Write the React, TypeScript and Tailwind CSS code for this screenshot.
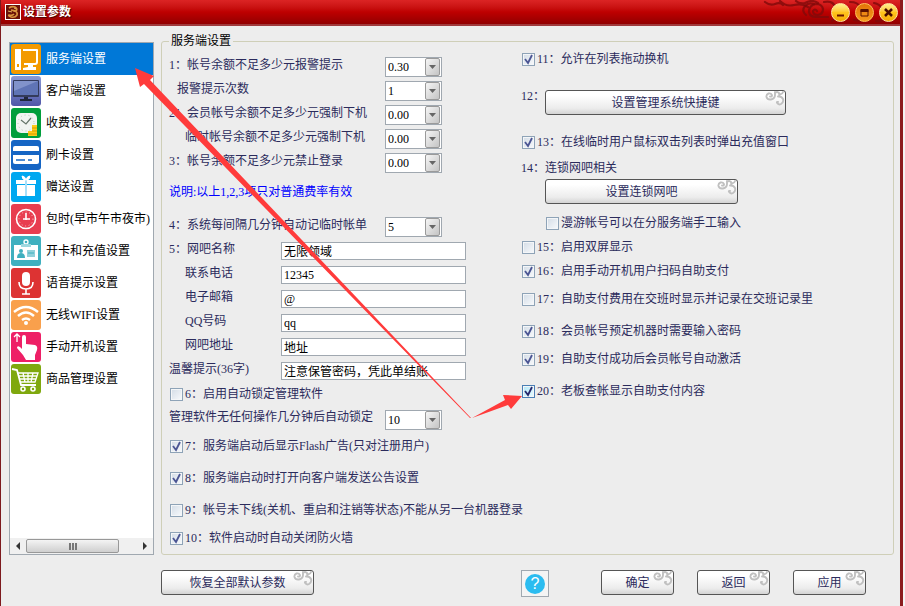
import { useState } from "react";
import type { ReactNode } from "react";
import clsx from "clsx";

interface MenuItem {
  label: string;
  color: string;
  icon: ReactNode;
}

interface CheckItem {
  id: string;
  label: string;
  checked: boolean;
  className: string;
}

const MENU: MenuItem[] = [
  {
    label: "服务端设置",
    color: "bg-[#f39a00]",
    icon: (
      <>
        <path d="M4 5h6v21H4z" fill="#fff" />
        <path d="M6 20h2v3H6z" fill="#f39a00" />
        <path d="M12 6h14v12q0 2-2 2H13" fill="none" stroke="#fff" strokeWidth="2" strokeLinejoin="round" />
        <path d="M17 20h5v3h3v3H12v-2l5-1z" fill="#fff" />
      </>
    ),
  },
  {
    label: "客户端设置",
    color: "bg-linear-to-b from-[#8b9ad6] to-[#5057a8]",
    icon: (
      <>
        <rect x="2" y="4" width="26" height="17" rx="1" fill="#333b5c" />
        <rect x="3" y="5" width="24" height="14" fill="#5f74b6" />
        <path d="M3 5h24L3 15z" fill="#8193cb" />
        <path d="M13 21h4v2h4v2H9v-2h4z" fill="#20273c" />
      </>
    ),
  },
  {
    label: "收费设置",
    color: "bg-[#009e3b]",
    icon: (
      <>
        <rect x="5" y="5" width="21" height="20" rx="5" fill="#f1f4f1" />
        <circle cx="15" cy="15" r="8" fill="none" stroke="#b9c4bb" strokeDasharray="1 3" />
        <path d="M10 12l5 4 5-6" fill="none" stroke="#66756a" strokeWidth="1.2" />
        <path d="M21 17h5v11h-5zM17 23h5v5h-5z" fill="#ffca18" />
        <path d="M21 20h5M21 23h5M17 26h9" stroke="#d69c00" />
      </>
    ),
  },
  {
    label: "刷卡设置",
    color: "bg-[#1565c4]",
    icon: (
      <>
        <path d="M2 11V8q0-2 2-2h22q2 0 2 2v3z" fill="#fff" />
        <path d="M2 15h26v7q0 2-2 2H4q-2 0-2-2z" fill="#fff" />
        <path d="M5 20h9m3 0h4" stroke="#1565c4" strokeWidth="1.4" />
      </>
    ),
  },
  {
    label: "赠送设置",
    color: "bg-[#00a8f0]",
    icon: (
      <>
        <path d="M5 8h9v4H5zM16 8h9v4h-9zM6 13h8v11H6zM16 13h8v11h-8z" fill="#fff" />
        <path d="M14 8h2v16h-2z" fill="#a9e0fa" />
        <path d="M15 8q-4 0-4-4 3 0 4 4zm0 0q4 0 4-4-3 0-4 4z" fill="#fff" stroke="#fff" />
      </>
    ),
  },
  {
    label: "包时(早市午市夜市)",
    color: "bg-[#e83e50]",
    icon: (
      <>
        <circle cx="15" cy="15" r="9.500" fill="none" stroke="#fff" strokeWidth="1.600" />
        <circle cx="15" cy="15" r="7" fill="none" stroke="#fbc3c8" strokeDasharray="1 2.600" />
        <path d="M15 9v7M12 15h7" fill="none" stroke="#fff" strokeWidth="1.600" />
      </>
    ),
  },
  {
    label: "开卡和充值设置",
    color: "bg-[#3fb0bf]",
    icon: (
      <>
        <path d="M3 9h24v15H3z" fill="#fff" />
        <circle cx="15" cy="6" r="2" fill="none" stroke="#fff" strokeWidth="1.400" />
        <path d="M10 8h10v3H10z" fill="#9ed8df" />
        <circle cx="10" cy="15" r="2" fill="#3fb0bf" />
        <path d="M6 22q0-5 4-5t4 5z" fill="#3fb0bf" />
        <path d="M16 14h8v7h-8z" fill="#8fd1da" />
        <path d="M17 17h6" stroke="#3fb0bf" />
      </>
    ),
  },
  {
    label: "语音提示设置",
    color: "bg-[#dd3333]",
    icon: (
      <>
        <rect x="11" y="4" width="8" height="14" rx="4" fill="#fff" />
        <path d="M8 14q0 7 7 7t7-7M15 21v5" fill="none" stroke="#fff" strokeWidth="1.600" />
        <path d="M11 26h8" stroke="#fff" strokeWidth="1.600" />
      </>
    ),
  },
  {
    label: "无线WIFI设置",
    color: "bg-[#f9a04c]",
    icon: (
      <>
        <path
          d="M3 12q12-10 24 0M7 16q8-7 16 0M11 20q4-3 8 0"
          fill="none"
          stroke="#fff"
          strokeWidth="2.400"
        />
        <circle cx="15" cy="23" r="2" fill="#fff" />
      </>
    ),
  },
  {
    label: "手动开机设置",
    color: "bg-[#ee1f66]",
    icon: (
      <>
        <path d="M6 10V3M3 5l3-3 3 3" fill="none" stroke="#fff" strokeWidth="1.300" />
        <path
          d="M11 5q0-2 2-2t2 2v7l9 1q3 1 2 5l-2 5v5H15l-3-5-6-7q0-3 3-1l2 2z"
          fill="#fff"
        />
      </>
    ),
  },
  {
    label: "商品管理设置",
    color: "bg-[#7fa80e]",
    icon: (
      <>
        <path d="M1 5l5 1 4 15h15" fill="none" stroke="#fff" strokeWidth="1.800" />
        <path
          d="M7 9h20l-3 9H10M8 12h18M9 15h16M12 9l2 9M17 9v9M22 9l-2 9"
          fill="none"
          stroke="#fff"
          strokeWidth="1.300"
        />
        <circle cx="12" cy="25" r="2" fill="none" stroke="#fff" strokeWidth="1.600" />
        <circle cx="22" cy="25" r="2" fill="none" stroke="#fff" strokeWidth="1.600" />
      </>
    ),
  },
];

const ALARMS = [
  { id: "alarm", label: "1：帐号余额不足多少元报警提示", value: "0.30", indent: "" },
  { id: "times", label: "报警提示次数", value: "1", indent: "pl-2" },
  { id: "member", label: "2：会员帐号余额不足多少元强制下机", value: "0.00", indent: "" },
  { id: "temp", label: "临时帐号余额不足多少元强制下机", value: "0.00", indent: "pl-4" },
  { id: "login", label: "3：帐号余额不足多少元禁止登录", value: "0.00", indent: "" },
];

const FIELDS = [
  { id: "name", label: "5：网吧名称", value: "无限领域", indent: "" },
  { id: "phone", label: "联系电话", value: "12345", indent: "pl-4" },
  { id: "mail", label: "电子邮箱", value: "@", indent: "pl-4" },
  { id: "qq", label: "QQ号码", value: "qq", indent: "pl-4" },
  { id: "address", label: "网吧地址", value: "地址", indent: "pl-4" },
  { id: "tips", label: "温馨提示(36字)", value: "注意保管密码，凭此单结账", indent: "" },
];

const LEFT_CHECKS: CheckItem[] = [
  { id: "c7", label: "7：服务端启动后显示Flash广告(只对注册用户)", checked: true, className: "" },
  { id: "c8", label: "8：服务端启动时打开向客户端发送公告设置", checked: true, className: "mt-2.5" },
  { id: "c9", label: "9：帐号未下线(关机、重启和注销等状态)不能从另一台机器登录", checked: false, className: "mt-2.5" },
  { id: "c10", label: "10：软件启动时自动关闭防火墙", checked: true, className: "mt-1.5" },
];

const RIGHT_CHECKS: CheckItem[] = [
  { id: "roam", label: "漫游帐号可以在分服务端手工输入", checked: false, className: "ml-6 mt-2" },
  { id: "c15", label: "15：启用双屏显示", checked: false, className: "mt-0.5" },
  { id: "c16", label: "16：启用手动开机用户扫码自助支付", checked: true, className: "mt-0.5" },
  { id: "c17", label: "17：自助支付费用在交班时显示并记录在交班记录里", checked: false, className: "mt-1.5" },
  { id: "c18", label: "18：会员帐号预定机器时需要输入密码", checked: true, className: "mt-2.5" },
  { id: "c19", label: "19：自助支付成功后会员帐号自动激活", checked: true, className: "mt-1.5" },
  { id: "c20", label: "20：老板查帐显示自助支付内容", checked: true, className: "mt-2.5" },
];

function Check({ id, label, checked, className }: CheckItem) {
  const active = id === "c20";
  return (
    <label htmlFor={id} className={clsx("flex h-[22px] items-center gap-0.5 whitespace-nowrap pl-px", className)}>
      <span className="relative flex">
        <input
          id={id}
          type="checkbox"
          defaultChecked={checked}
          className={clsx(
            "peer size-[13px] appearance-none border bg-linear-to-br shadow-[inset_0_0_0_1px_#f4f6f8]",
            active
              ? "border-[#4a7fb5] from-[#b4e8f8] to-[#e8fbff]"
              : "border-[#8ea3b7] from-[#d3dce6] to-[#f8fafc]"
          )}
        />
        <svg
          viewBox="0 0 13 13"
          className="pointer-events-none absolute inset-0 hidden size-[13px] peer-checked:block"
        >
          <path
            d="M3 6l3 4 4-8"
            fill="none"
            stroke={active ? "#27276b" : "#4b5593"}
            strokeWidth="1.800"
          />
        </svg>
      </span>
      {label}
    </label>
  );
}

function Combo({ id, value }: { id: string; value: string }) {
  return (
    <span className="relative flex h-5 w-[57px] shrink-0">
      <select
        id={id}
        defaultValue={value}
        className="w-full appearance-none border border-[#a0a8b0] bg-white pl-0.5 leading-4 text-black outline-none"
      >
        <option>{value}</option>
      </select>
      <span className="pointer-events-none absolute inset-y-px right-0.5 flex w-[15px] items-center justify-center rounded-xs border border-[#9a9a9a] bg-linear-to-br from-[#f6f6f6] to-[#c4c4c4]">
        <svg viewBox="0 0 7 4" className="h-1 w-[7px]">
          <path d="M0 0h7L3.500 4z" fill="#666" />
        </svg>
      </span>
    </span>
  );
}

function CloudButton({ label, className }: { label: string; className: string }) {
  return (
    <button
      type="button"
      className={clsx(
        "relative h-[25px] shrink-0 rounded-[3px] border border-[#555] bg-linear-to-b from-white from-20% via-[#ececec] via-75% to-[#d4d4d4] leading-4 text-[#2b2b5c]",
        className
      )}
    >
      {label}
      <svg viewBox="0 0 20 16" className="absolute right-0 top-0 h-4 w-5">
        <path
          d="M5 5.500q2 .5 2-1.300Q6 2 3.500 2.500 1 3.500 1.500 6q1 3 4.500 2.500 4-.8 4-4.500V1M10 2q2-2 4 0 1 1.500 0 3M14 3q3 1 4-2M13 11q-1.500-.5-1 .8 1.500 2.500 4 1.200 3-2 2-5-1.500-3-5-2.500"
          fill="none"
          stroke="#c0c0c0"
          strokeWidth="1.900"
          strokeLinecap="round"
        />
      </svg>
    </button>
  );
}

function TitleBar() {
  return (
    <header className="relative flex h-[26px] items-center gap-0.5 border-b-2 border-[#a03a3c] bg-linear-to-b from-[#dc2424] via-[#be0000] to-[#920000] pl-1 pr-0.5">
      <svg viewBox="0 0 140 24" className="absolute right-0 top-0 h-6 w-[140px]">
        <g fill="none" stroke="#800a0a" strokeOpacity=".8" strokeWidth="2.200" strokeLinecap="round">
          <path d="M5 2q5 4 10 2t8 1M20 1q6 6 14 4t14 2M36 1q3 3 9 2 7-4 13 0" />
          <path d="M46 15q-5-4-1-9 4-4 9-2" />
          <path d="M57 11q-2-3-4 0 0 4 5 4 5-1 5-6-1-5-7-5-7 1-7 8 1 5 7 5h12" />
          <path d="M64 2q9-2 11 5 0 6 7 6M72 21q4-4 8-1M90 2q8 0 10 5M94 20q8 2 12-3M114 3q6 1 8 6M116 21q6 1 9-3" />
        </g>
      </svg>
      <svg viewBox="0 0 16 16" className="size-4 shrink-0">
        <rect x=".5" y=".5" width="15" height="15" fill="#6a1208" stroke="#fff" />
        <path
          d="M4 4q3-2 6-1 3 2 1 4l-5-1M8 7q5 0 4 4-2 3-6 2-3-1-2-2 3 1 5-1"
          fill="none"
          stroke="#d9953f"
          strokeWidth="1.700"
        />
        <path d="M3 7l4 1M9 4l2 1" stroke="#e9b765" />
      </svg>
      <h1 className="font-bold text-white [text-shadow:1px_1px_1px_#400]">设置参数</h1>
      <div className="relative ml-auto flex gap-[5px]">
        <button
          type="button"
          aria-label="最小化"
          className="size-[19px] rounded-full border border-[#ffe9a0] bg-linear-to-b from-[#fff08a] via-[#ffc41c] to-[#f5a800]"
        >
          <svg viewBox="0 0 17 17">
            <path d="M5 11.500h7" stroke="#6b1500" strokeWidth="2" />
          </svg>
        </button>
        <button
          type="button"
          aria-label="最大化"
          className="size-[19px] rounded-full border border-[#ffc65a] bg-linear-to-b from-[#e27408] to-[#f59a1c]"
        >
          <svg viewBox="0 0 17 17">
            <path d="M5 6h7v6H5z" fill="none" stroke="#5a1000" />
            <path d="M4.500 6.500h8" stroke="#5a1000" strokeWidth="3" />
          </svg>
        </button>
        <button
          type="button"
          aria-label="关闭"
          className="size-[19px] rounded-full border border-[#ffe9a0] bg-linear-to-b from-[#fff08a] via-[#ffc41c] to-[#f5a800]"
        >
          <svg viewBox="0 0 17 17">
            <path d="M5 5l7 7M12 5l-7 7" stroke="#4a0c00" strokeWidth="2.500" />
          </svg>
        </button>
      </div>
    </header>
  );
}

function Sidebar() {
  const [selected, setSelected] = useState(0);
  return (
    <nav className="mt-2 flex w-[145px] shrink-0 flex-col overflow-hidden border border-[#a0a8b0] bg-white">
      {MENU.map((item, index) => (
        <button
          key={item.label}
          type="button"
          onClick={() => setSelected(index)}
          className={clsx(
            "flex h-8 shrink-0 items-center gap-[5px] whitespace-nowrap pl-px text-left",
            index === selected ? "bg-[#0078d7] text-white" : "text-black"
          )}
        >
          <span className={clsx("size-[30px] shrink-0 overflow-hidden rounded-[3px]", item.color)}>
            <svg viewBox="0 0 30 30">{item.icon}</svg>
          </span>
          {item.label}
        </button>
      ))}
      {/* 横向滚动条 */}
      <div className="mt-auto flex h-4 items-center bg-[#f0f0f0]">
        <svg viewBox="0 0 16 16" className="size-4">
          <path d="M10 4v8L6 8z" fill="#333" />
        </svg>
        <div className="flex h-3.5 w-[93px] items-center justify-center gap-px rounded-xs border border-[#989898] bg-linear-to-b from-[#f4f4f4] to-[#cfcfcf]">
          <span className="h-[7px] w-0.5 bg-[#777]" />
          <span className="h-[7px] w-0.5 bg-[#777]" />
          <span className="h-[7px] w-0.5 bg-[#777]" />
        </div>
        <svg viewBox="0 0 16 16" className="ml-auto size-4">
          <path d="M6 4v8l4-4z" fill="#333" />
        </svg>
      </div>
    </nav>
  );
}

function LeftColumn() {
  return (
    <div className="pt-[7px]">
      {ALARMS.map((row) => (
        <div key={row.id} className="flex h-6 items-center">
          <label htmlFor={row.id} className={clsx("w-[216px] whitespace-nowrap pb-1", row.indent)}>
            {row.label}
          </label>
          <Combo id={row.id} value={row.value} />
        </div>
      ))}
      <p className="h-10 pt-2 text-[#0000ff]">说明:以上1,2,3项只对普通费率有效</p>
      <div className="flex h-6 items-center">
        <label htmlFor="interval" className="w-[216px] whitespace-nowrap pb-1">
          4：系统每间隔几分钟自动记临时帐单
        </label>
        <Combo id="interval" value="5" />
      </div>
      {FIELDS.map((row) => (
        <div key={row.id} className="flex h-6 items-center">
          <label htmlFor={row.id} className={clsx("w-28 whitespace-nowrap pb-1", row.indent)}>
            {row.label}
          </label>
          <input
            id={row.id}
            type="text"
            defaultValue={row.value}
            className="h-[18px] w-[185px] border border-[#a0a8b0] bg-white px-0.5 leading-4 text-black outline-none"
          />
        </div>
      ))}
      <Check id="c6" label="6：启用自动锁定管理软件" checked={false} className="" />
      <div className="flex h-[30px] items-center">
        <label htmlFor="lock" className="w-[216px] whitespace-nowrap pb-1.5">
          管理软件无任何操作几分钟后自动锁定
        </label>
        <Combo id="lock" value="10" />
      </div>
      {LEFT_CHECKS.map((item) => (
        <Check key={item.id} {...item} />
      ))}
    </div>
  );
}

function RightColumn() {
  return (
    <div>
      <Check id="c11" label="11：允许在列表拖动换机" checked className="" />
      <div className="mt-5 flex items-start">
        <span className="w-6 whitespace-nowrap leading-3">12：</span>
        <CloudButton label="设置管理系统快捷键" className="w-[241px]" />
      </div>
      <Check id="c13" label="13：在线临时用户鼠标双击列表时弹出充值窗口" checked className="mt-4" />
      <p className="mt-1 h-[22px] leading-[22px]">14：连锁网吧相关</p>
      <CloudButton label="设置连锁网吧" className="ml-6 block w-[193px]" />
      {RIGHT_CHECKS.map((item) => (
        <Check key={item.id} {...item} />
      ))}
    </div>
  );
}

export default function App() {
  return (
    <div className="relative min-h-screen bg-[#f4f4f4] pr-0.5 font-['Liberation_Serif','Noto_Sans_CJK_SC',sans-serif] text-xs leading-[18px] text-[#2b2b5c]">
      <div className="flex min-h-screen flex-col border-l border-r-[3px] border-l-[#7d1a1e] border-r-[#8c1c1f] bg-[#ededed]">
        <TitleBar />
        <main className="flex gap-[7px] pl-2 pr-1.5 pt-2">
          <Sidebar />
          <fieldset className="min-w-0 flex-1 rounded-[3px] border border-[#cfcfb8] pb-[5px] pl-[7px]">
            <legend className="px-0.5 leading-[14px] text-black">服务端设置</legend>
            <div className="grid grid-cols-[352px_1fr]">
              <LeftColumn />
              <RightColumn />
            </div>
          </fieldset>
        </main>
        <footer className="flex items-start pb-2 pl-40 pr-[34px] pt-[15px]">
          <div className="w-[360px] shrink-0">
            <CloudButton label="恢复全部默认参数" className="w-[153px]" />
          </div>
          <button
            type="button"
            aria-label="帮助"
            className="flex h-[27px] w-7 items-center justify-center border border-[#a0a8b0] bg-[#f4f4f4]"
          >
            <span className="flex size-5 items-center justify-center rounded-full bg-[#2bbcf0] font-['Liberation_Sans',sans-serif] text-base text-white">
              ?
            </span>
          </button>
          <div className="ml-auto flex gap-[23px]">
            <CloudButton label="确定" className="w-[73px]" />
            <CloudButton label="返回" className="w-[73px]" />
            <CloudButton label="应用" className="w-[73px]" />
          </div>
        </footer>
      </div>
      {/* 指向菜单和第20项的标注箭头 */}
      <svg viewBox="0 0 905 606" className="pointer-events-none absolute left-0 top-0 h-[606px] w-[905px]">
        <path d="M135 68l19 8-4 4 321 338h-1L144 84l-4 3z" fill="#ff3b3b" />
        <path d="M472 418l33-18-2-5 19 1-11 13-3-4z" fill="#ff3b3b" />
      </svg>
    </div>
  );
}
